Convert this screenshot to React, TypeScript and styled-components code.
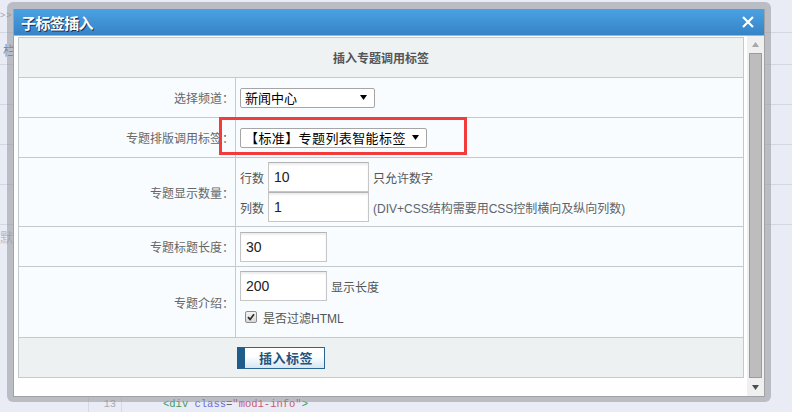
import styled, { createGlobalStyle } from "styled-components";

const GlobalStyle = createGlobalStyle`
    html, body {
        margin: 0;
        padding: 0;
    }

    body {
        background: #e9ebf5;
        font-family: "Liberation Sans", "Noto Sans CJK SC", sans-serif;
    }
`;

const Screen = styled.div`
    position: relative;
    width: 792px;
    height: 412px;
    overflow: hidden;
    background: #e9ebf5;
`;

/* the page that sits behind the dialog */
const Backdrop = styled.div`
    display: flex;
    flex-direction: column;
    height: 100%;
`;

const BackRow = styled.div<{ $height: number }>`
    flex: none;
    height: ${(p) => p.$height}px;
    box-sizing: border-box;
    border-bottom: 1px solid #d3d7e1;
    padding: 11px 0 0 3px;
    font-size: 13px;
    line-height: 14px;
    color: #85878e;
`;

const Crumb = styled(BackRow)`
    padding: 10px 0 0 0;
    font-size: 9px;
    line-height: 10px;
    letter-spacing: 1px;
    color: #a4a6ae;
`;

const BackFill = styled.div`
    flex: none;
    height: 172px;
    padding-top: 6px;
    box-sizing: border-box;
    font-size: 13px;
    line-height: 14px;
    color: #b9bbc3;
`;

const CodeLine = styled.div`
    flex: none;
    display: flex;
    height: 15px;
    line-height: 14px;
    font-family: "Liberation Mono", monospace;
    font-size: 10.5px;
`;

const Gutter = styled.div`
    margin-left: 88px;
    width: 34px;
    box-sizing: border-box;
    border-left: 1px solid #d6d9e2;
    border-right: 1px solid #d6d9e2;
    padding-right: 5px;
    text-align: right;
    color: #a9abb2;
`;

const Code = styled.div`
    padding-left: 41px;
    white-space: pre;
`;

const Tok = styled.span<{ $c: string }>`
    color: ${(p) => p.$c};
`;

/* dialog */
const Dialog = styled.div`
    position: absolute;
    left: 7px;
    top: 2px;
    width: 764px;
    height: 400px;
    box-sizing: border-box;
    padding: 7px 6px 5px 6px;
    border-radius: 6px;
    background: rgba(141, 143, 148, 0.5);
`;

const Window = styled.div`
    height: 100%;
    box-sizing: border-box;
    display: flex;
    flex-direction: column;
    background: #fff;
    border: 1px solid #a2a2a2;
    border-top: none;
`;

const TitleBar = styled.div`
    flex: none;
    height: 27px;
    box-sizing: border-box;
    display: flex;
    align-items: center;
    justify-content: space-between;
    padding: 0 10px 0 7px;
    background: linear-gradient(#4aa2e3, #3683c7);
    border-bottom: 1px solid #82bdea;
`;

const Title = styled.span`
    font-size: 15px;
    font-weight: bold;
    letter-spacing: -0.6px;
    color: #fff;
    text-shadow: 1px 1px 0 #1b2f48;
`;

const CloseButton = styled.span`
    display: flex;
    width: 12px;
    height: 12px;
`;

const Body = styled.div`
    flex: 1;
    display: flex;
    min-height: 0;
`;

const Content = styled.div`
    flex: none;
    padding: 1px 0 0 4px;
`;

const FormTable = styled.div`
    width: 726px;
    box-sizing: border-box;
    border: 1px solid #c3cace;
    display: grid;
    grid-template-columns: 217px 1fr;
    font-size: 12px;
`;

const HeadRow = styled.div`
    grid-column: 1 / -1;
    height: 40px;
    box-sizing: border-box;
    border-bottom: 1px solid #c3cace;
    background: #eef2f3;
    display: flex;
    align-items: center;
    justify-content: center;
    font-weight: bold;
    color: #555;
`;

const Label = styled.div<{ $height: number }>`
    height: ${(p) => p.$height}px;
    box-sizing: border-box;
    border-bottom: 1px solid #c3cace;
    border-right: 1px solid #c3cace;
    background: #f8fcff;
    padding-right: 1px;
    display: flex;
    align-items: center;
    justify-content: flex-end;
    color: #666;
`;

const Value = styled.div<{ $height: number; $top?: boolean }>`
    height: ${(p) => p.$height}px;
    box-sizing: border-box;
    border-bottom: 1px solid #c3cace;
    background: #f8fcff;
    padding: ${(p) => (p.$top ? "4px 0 0 4px" : "0 0 0 4px")};
    display: flex;
    flex-direction: column;
    justify-content: ${(p) => (p.$top ? "flex-start" : "center")};
    color: #555;
`;

const Line = styled.div`
    display: flex;
    align-items: center;
    gap: 4px;
`;

const SelectWrap = styled.div`
    position: relative;
    align-self: flex-start;
`;

const SelectBox = styled.div<{ $width: number; $spacing?: number }>`
    width: ${(p) => p.$width}px;
    height: 20px;
    box-sizing: border-box;
    border: 1px solid #a5a5a5;
    border-radius: 2px;
    background: #fff;
    padding: 0 7px 0 4px;
    display: flex;
    align-items: center;
    justify-content: space-between;
    font-size: 13px;
    letter-spacing: ${(p) => p.$spacing ?? 0}px;
    color: #000;
`;

const Highlight = styled.div`
    position: absolute;
    left: -21px;
    top: -11px;
    width: 248px;
    height: 38px;
    box-sizing: border-box;
    border: 3px solid #f23b3b;
    pointer-events: none;
`;

const TextInput = styled.input<{ $width: number }>`
    width: ${(p) => p.$width}px;
    height: 30px;
    box-sizing: border-box;
    margin: 0;
    padding: 0 0 0 5px;
    border: 1px solid #c6c6c6;
    border-top-color: #b4b4b4;
    box-shadow: inset 0 2px 2px rgba(0, 0, 0, 0.07);
    background: #fff;
    font-family: "Liberation Sans", sans-serif;
    font-size: 14px;
    color: #222;
    outline: none;
`;

const Hint = styled.span`
    color: #5f6369;
`;

const CheckLine = styled.label`
    display: flex;
    align-items: center;
    gap: 6px;
    height: 20px;
    margin: 6px 0 0 5px;
    color: #555;
`;

const CheckBox = styled.span`
    display: flex;
    align-items: center;
    justify-content: center;
    width: 12px;
    height: 12px;
    box-sizing: border-box;
    border: 1px solid #8d8d8d;
    border-radius: 2px;
    background: linear-gradient(#f4f4f4, #d8d8d8);
`;

const FootRow = styled.div`
    grid-column: 1 / -1;
    height: 39px;
    box-sizing: border-box;
    background: #eef1f2;
    padding-left: 218px;
    display: flex;
    align-items: center;
`;

const SubmitButton = styled.button`
    width: 88px;
    height: 22px;
    box-sizing: border-box;
    margin: 0;
    padding: 0 0 0 3px;
    border: 1px solid #2a6692;
    border-left: 8px solid #1f5c89;
    background: linear-gradient(#ffffff 40%, #d6e6f2);
    font-family: "Liberation Sans", "Noto Sans CJK SC", sans-serif;
    font-size: 13px;
    font-weight: bold;
    letter-spacing: 0.5px;
    color: #24527c;
`;

const Scrollbar = styled.div`
    flex: none;
    width: 17px;
    margin-left: auto;
    background: #f0f0f0;
    display: flex;
    flex-direction: column;
    align-items: center;
`;

const ScrollArrow = styled.div<{ $height: number }>`
    flex: none;
    height: ${(p) => p.$height}px;
    display: flex;
    align-items: center;
    justify-content: center;
`;

const Thumb = styled.div`
    flex: 1;
    width: 13px;
    box-sizing: border-box;
    border: 1px solid #9c9c9c;
    background: #bdbdbd;
`;

const Caret = ({ color = "#000", up = false }: { color?: string; up?: boolean }) => (
    <svg width="7" height="5" viewBox="0 0 7 5">
        <polygon points={up ? "3.5,0 7,5 0,5" : "0,0 7,0 3.5,5"} fill={color} />
    </svg>
);

const App = () => {
    return (
        <Screen>
            <GlobalStyle />
            <Backdrop>
                <Crumb $height={33}>&gt;&gt;</Crumb>
                <BackRow $height={32}>栏</BackRow>
                <BackRow $height={40} />
                <BackRow $height={40} />
                <BackRow $height={40} />
                <BackRow $height={40} />
                <BackFill>默认</BackFill>
                <CodeLine>
                    <Gutter>13</Gutter>
                    <Code>
                        <Tok $c="#3f9a62">&lt;div </Tok>
                        <Tok $c="#6b6bd6">class</Tok>
                        <Tok $c="#666">=</Tok>
                        <Tok $c="#c65a6e">"mod1-info"</Tok>
                        <Tok $c="#3f9a62">&gt;</Tok>
                    </Code>
                </CodeLine>
            </Backdrop>

            <Dialog>
                <Window>
                    <TitleBar>
                        <Title>子标签插入</Title>
                        <CloseButton>
                            <svg width="12" height="12" viewBox="0 0 12 12">
                                <path d="M1 1 L11 11 M11 1 L1 11" stroke="#fff" strokeWidth="2.2" />
                            </svg>
                        </CloseButton>
                    </TitleBar>
                    <Body>
                        <Content>
                            <FormTable>
                                <HeadRow>插入专题调用标签</HeadRow>

                                <Label $height={40}>选择频道：</Label>
                                <Value $height={40}>
                                    <SelectWrap>
                                        <SelectBox $width={135}>
                                            <span>新闻中心</span>
                                            <Caret />
                                        </SelectBox>
                                    </SelectWrap>
                                </Value>

                                <Label $height={40}>专题排版调用标签：</Label>
                                <Value $height={40}>
                                    <SelectWrap>
                                        <SelectBox $width={187} $spacing={0.4}>
                                            <span>【标准】专题列表智能标签</span>
                                            <Caret />
                                        </SelectBox>
                                        <Highlight />
                                    </SelectWrap>
                                </Value>

                                <Label $height={69}>专题显示数量：</Label>
                                <Value $height={69} $top>
                                    <Line>
                                        <span>行数</span>
                                        <TextInput $width={101} value="10" readOnly />
                                        <span>只允许数字</span>
                                    </Line>
                                    <Line>
                                        <span>列数</span>
                                        <TextInput $width={101} value="1" readOnly />
                                        <Hint>(DIV+CSS结构需要用CSS控制横向及纵向列数)</Hint>
                                    </Line>
                                </Value>

                                <Label $height={40}>专题标题长度：</Label>
                                <Value $height={40}>
                                    <Line>
                                        <TextInput $width={87} value="30" readOnly />
                                    </Line>
                                </Value>

                                <Label $height={71}>专题介绍：</Label>
                                <Value $height={71} $top>
                                    <Line>
                                        <TextInput $width={87} value="200" readOnly />
                                        <span>显示长度</span>
                                    </Line>
                                    <CheckLine>
                                        <CheckBox>
                                            <svg width="8" height="8" viewBox="0 0 8 8">
                                                <path d="M1 4.2 L3.1 6.4 L7 1.3" stroke="#2b2b2b" strokeWidth="1.7" fill="none" />
                                            </svg>
                                        </CheckBox>
                                        <span>是否过滤HTML</span>
                                    </CheckLine>
                                </Value>

                                <FootRow>
                                    <SubmitButton type="button">插入标签</SubmitButton>
                                </FootRow>
                            </FormTable>
                        </Content>
                        <Scrollbar>
                            <ScrollArrow $height={17}>
                                <Caret color="#a8a8a8" up />
                            </ScrollArrow>
                            <Thumb />
                            <ScrollArrow $height={18}>
                                <Caret color="#4e4e4e" />
                            </ScrollArrow>
                        </Scrollbar>
                    </Body>
                </Window>
            </Dialog>
        </Screen>
    );
};

export default App;
